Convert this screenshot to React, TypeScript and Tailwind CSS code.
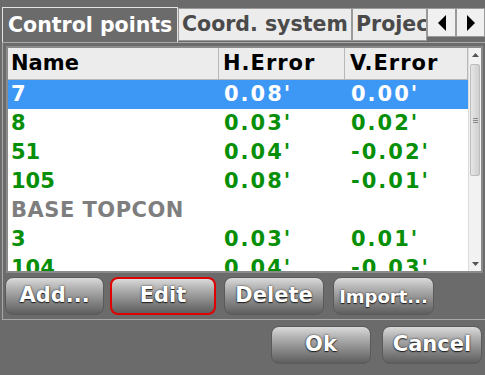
import React from 'react';

interface PointRow {
  name: string;
  h?: string;
  v?: string;
  kind: 'selected' | 'point' | 'group';
}

const rows: PointRow[] = [
  { name: '7', h: "0.08'", v: "0.00'", kind: 'selected' },
  { name: '8', h: "0.03'", v: "0.02'", kind: 'point' },
  { name: '51', h: "0.04'", v: "-0.02'", kind: 'point' },
  { name: '105', h: "0.08'", v: "-0.01'", kind: 'point' },
  { name: 'BASE TOPCON', kind: 'group' },
  { name: '3', h: "0.03'", v: "0.01'", kind: 'point' },
  { name: '104', h: "0.04'", v: "-0.03'", kind: 'point' },
];

function Button({ label, focused, small, className }: { label: string; focused?: boolean; small?: boolean; className: string }) {
  return (
    <div
      className={
        'flex items-center justify-center rounded-[8px] h-[38px] text-white bg-[linear-gradient(to_bottom,#dadada_0%,#b0b0b0_30%,#8c8c8c_60%,#5e5e5e_100%)] [text-shadow:0_0_2px_#222,0_1px_1px_#222] ' +
        (focused ? 'border-2 border-[#e00000] ' : 'border border-[#5a5a5a] ') +
        (small ? 'text-[18px] ' : 'text-[21px] ') +
        className
      }
    >
      {label}
    </div>
  );
}

export default function App() {
  return (
    <div className="w-[485px] h-[375px] bg-[#6b6b6b] overflow-hidden font-['DejaVu_Sans',sans-serif] font-bold select-none">
      {/* tab strip */}
      <div className="h-[42px] pt-[7px] flex items-start">
        <div className="ml-[2px] w-[176px] h-[35px] border-t border-l border-r border-[#e4e4e4] bg-[#6b6b6b] text-white text-[20.5px] flex items-center pl-[5px] whitespace-nowrap">
          Control points
        </div>
        <div className="mt-[1px] w-[174px] h-[33px] bg-[#ececec] border border-[#9a9a9a] text-[#4a4a4a] text-[20.5px] flex items-center pl-[3px] whitespace-nowrap overflow-hidden">
          Coord. system
        </div>
        <div className="mt-[1px] w-[75px] h-[33px] bg-[#ececec] border border-[#9a9a9a] text-[#4a4a4a] text-[20.5px] flex items-center pl-[3px] whitespace-nowrap overflow-hidden">
          Project
        </div>
        <div className="mt-[1px] w-[29px] h-[29px] bg-[#f0f0f0] border border-[#9a9a9a] flex items-center justify-center">
          <svg width="10" height="16" viewBox="0 0 10 16"><polygon points="9,0 9,16 1,8" fill="#000" /></svg>
        </div>
        <div className="mt-[1px] w-[29px] h-[29px] bg-[#f0f0f0] border border-[#9a9a9a] flex items-center justify-center">
          <svg width="10" height="16" viewBox="0 0 10 16"><polygon points="1,0 1,16 9,8" fill="#000" /></svg>
        </div>
      </div>

      {/* panel */}
      <div className="ml-[2px] h-[278px] border-l border-t border-b border-[#a8a8a8] flex flex-col">
        <div className="ml-[3px] mt-[3px] mr-[2px] h-[227px] border-2 border-[#8a8a8a] bg-white flex overflow-hidden">
          <div className="flex-1 flex flex-col">
            <div className="h-[32px] flex bg-[#ececec] text-black text-[21px] shrink-0">
              <div className="w-[211px] border-r border-b border-[#b8b8b8] pl-[3px] flex items-center">Name</div>
              <div className="w-[126px] border-r border-b border-[#b8b8b8] pl-[4px] flex items-center tracking-[1px]">H.Error</div>
              <div className="flex-1 border-r border-b border-[#b8b8b8] pl-[5px] flex items-center tracking-[1px]">V.Error</div>
            </div>
            {rows.map((r, i) => (
              <div
                key={i}
                className={
                  'h-[29px] shrink-0 flex items-center text-[21px] ' +
                  (r.kind === 'selected' ? 'bg-[#3d97f5] text-white' : r.kind === 'group' ? 'text-[#7e7e7e]' : 'text-[#078f07]')
                }
              >
                <div className={'w-[211px] pl-[3px] whitespace-nowrap ' + (r.kind === 'group' ? 'tracking-[0.5px]' : '')}>{r.name}</div>
                <div className="w-[126px] pl-[5px] tracking-[2px]">{r.h}</div>
                <div className="flex-1 pl-[6px] tracking-[2px]">{r.v}</div>
              </div>
            ))}
          </div>
          {/* scrollbar */}
          <div className="w-[13px] bg-[#f2f2f2] border-l border-[#dcdcdc] flex flex-col items-center">
            <div className="h-[14px] flex items-center justify-center">
              <svg width="7" height="4" viewBox="0 0 7 4"><polygon points="0,4 7,4 3.5,0" fill="#555" /></svg>
            </div>
            <div className="w-[10px] h-[112px] mt-[2px] rounded-[2px] bg-[linear-gradient(to_right,#e6e6e6,#cfcfcf)] border border-[#bdbdbd] flex flex-col items-center justify-center gap-[1px]">
              <div className="w-[5px] h-[1px] bg-[#888]" />
              <div className="w-[5px] h-[1px] bg-[#888]" />
              <div className="w-[5px] h-[1px] bg-[#888]" />
            </div>
            <div className="flex-1" />
            <div className="h-[14px] flex items-center justify-center">
              <svg width="7" height="4" viewBox="0 0 7 4"><polygon points="0,0 7,0 3.5,4" fill="#555" /></svg>
            </div>
          </div>
        </div>
        <div className="flex items-center mt-[4px] pl-[2px]">
          <Button label="Add..." className="w-[99px]" />
          <Button label="Edit" focused className="w-[106px] ml-[6px]" />
          <Button label="Delete" className="w-[100px] ml-[8px]" />
          <Button label="Import..." small className="w-[101px] ml-[9px]" />
        </div>
      </div>

      <div className="flex justify-end mt-[6px] pr-[3px]">
        <Button label="Ok" className="w-[100px]" />
        <Button label="Cancel" className="w-[100px] ml-[11px]" />
      </div>
    </div>
  );
}
